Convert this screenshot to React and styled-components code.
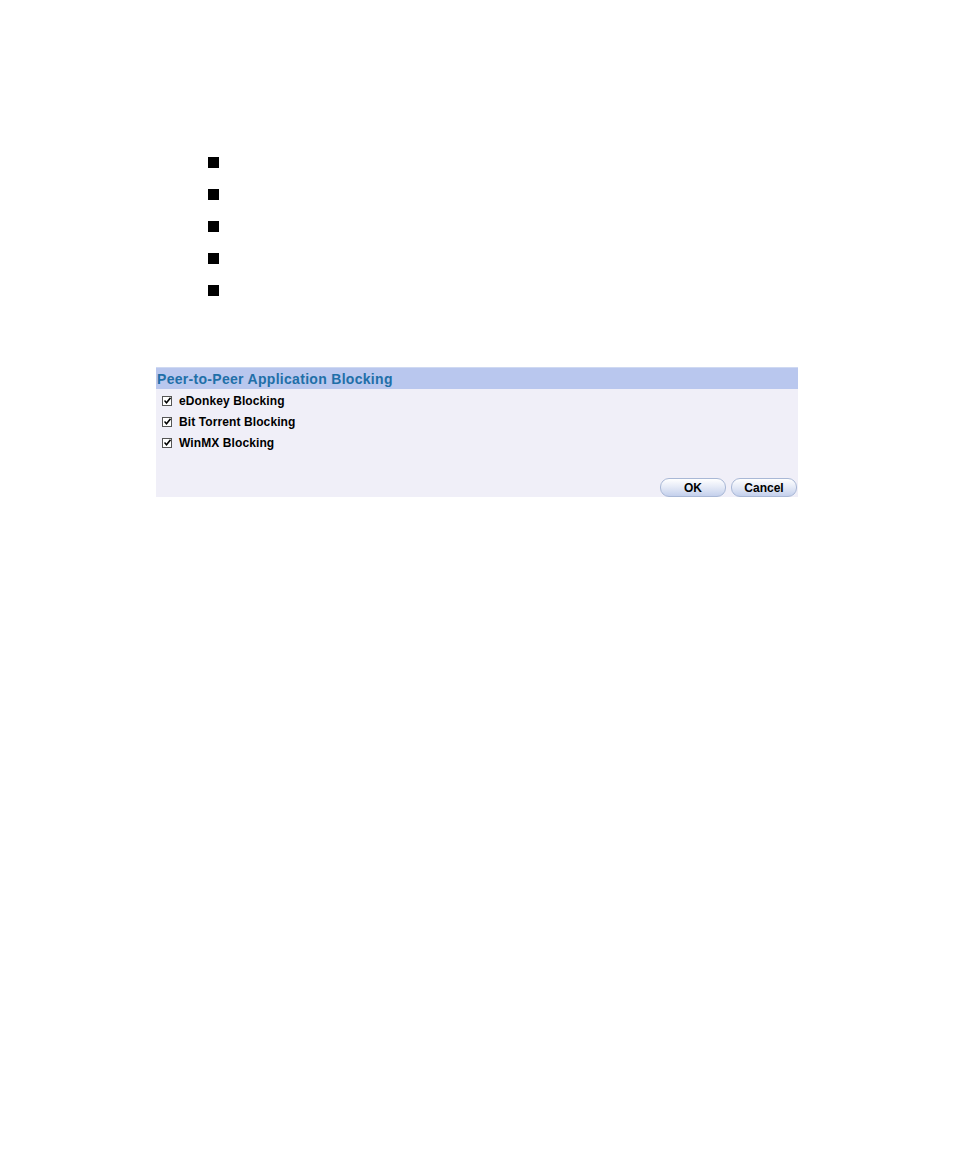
import React, { useState } from "react";
import styled, { createGlobalStyle } from "styled-components";

const GlobalStyle = createGlobalStyle`
    html, body {
        margin: 0;
        padding: 0;
        background: #ffffff;
        font-family: "Liberation Sans", Arial, sans-serif;
    }
`;

const apps = [
    { id: "edonkey", label: "eDonkey Blocking" },
    { id: "bittorrent", label: "Bit Torrent Blocking" },
    { id: "winmx", label: "WinMX Blocking" },
];

const App = () => {
    const [checked, setChecked] = useState({ edonkey: true, bittorrent: true, winmx: true });

    const toggle = (id) => {
        setChecked({ ...checked, [id]: !checked[id] });
    };

    return (
        <>
            <GlobalStyle />
            <St.Page>
                <St.BulletList>
                    {[0, 1, 2, 3, 4].map((i) => (
                        <St.Bullet key={i} />
                    ))}
                </St.BulletList>

                <St.Panel>
                    <St.Header>Peer-to-Peer Application Blocking</St.Header>
                    <St.Body>
                        {apps.map((app) => (
                            <St.Row key={app.id}>
                                <St.Check onClick={() => toggle(app.id)}>
                                    {checked[app.id] && (
                                        <svg width="7" height="7" viewBox="0 0 7 7">
                                            <path d="M0.5 3.5 L2.5 5.8 L6.5 0.8" fill="none" stroke="#000" strokeWidth="1.5" />
                                        </svg>
                                    )}
                                </St.Check>
                                <St.Label>{app.label}</St.Label>
                            </St.Row>
                        ))}
                        <St.Actions>
                            <St.Button>OK</St.Button>
                            <St.Button>Cancel</St.Button>
                        </St.Actions>
                    </St.Body>
                </St.Panel>
            </St.Page>
        </>
    );
};

export default App;

const St = {
    Page: styled.div`
        width: 954px;
        height: 1155px;
        padding-top: 157px;
        box-sizing: border-box;
    `,

    BulletList: styled.div`
        display: flex;
        flex-direction: column;
        gap: 21px;
        padding-left: 208px;
    `,

    Bullet: styled.div`
        width: 11px;
        height: 11px;
        background: #000000;
    `,

    Panel: styled.div`
        margin: 71px 0 0 156px;
        width: 642px;
        background: #f0eff8;
    `,

    Header: styled.div`
        height: 22px;
        line-height: 23px;
        padding-left: 1px;
        background: #b9c7ee;
        border-top: 1px solid #cfd9f2;
        box-sizing: border-box;
        color: #1f6fa8;
        font-size: 14px;
        font-weight: bold;
        letter-spacing: 0.3px;
    `,

    Body: styled.div`
        display: flex;
        flex-direction: column;
        padding-top: 1px;
        height: 108px;
        box-sizing: border-box;
    `,

    Row: styled.div`
        display: flex;
        align-items: center;
        height: 21px;
        padding-left: 6px;
    `,

    Check: styled.div`
        display: flex;
        align-items: center;
        justify-content: center;
        width: 8px;
        height: 8px;
        border: 1px solid #555555;
        background: #ffffff;
        cursor: pointer;
    `,

    Label: styled.span`
        margin-left: 7px;
        font-size: 12px;
        font-weight: bold;
        letter-spacing: 0.1px;
        color: #000000;
    `,

    Actions: styled.div`
        display: flex;
        justify-content: flex-end;
        gap: 5px;
        margin-top: auto;
        padding-right: 1px;
    `,

    Button: styled.button`
        width: 66px;
        height: 19px;
        padding: 0;
        border: 1px solid #a9b8d6;
        border-radius: 9px;
        background: linear-gradient(to bottom, #ffffff 0%, #e6ebf7 45%, #c4d0ec 100%);
        font-family: "Liberation Sans", Arial, sans-serif;
        font-size: 12px;
        font-weight: bold;
        color: #000000;
        cursor: pointer;
    `,
};
